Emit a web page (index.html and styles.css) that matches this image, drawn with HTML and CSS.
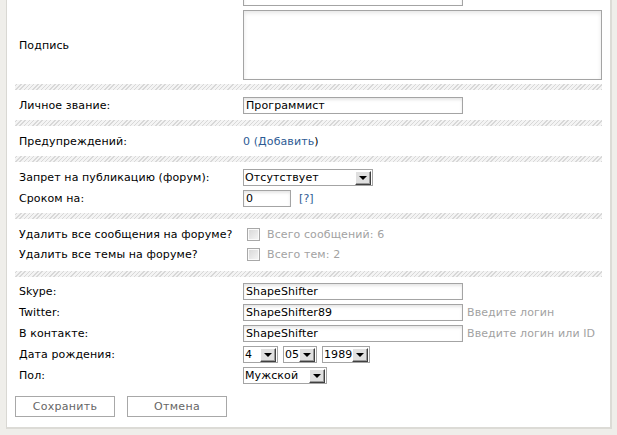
FILE: index.html
```html
<!DOCTYPE html>
<html lang="ru">
<head>
<meta charset="utf-8">
<title>Профиль</title>
<link rel="stylesheet" href="styles.css">
</head>
<body>
<div class="panel">
  <div class="section top">
    <div class="row"><span class="label"></span><span class="input wide"></span></div>
    <div class="row tall"><span class="label">Подпись</span><span class="textarea"></span></div>
  </div>
  <div class="hatch"></div>
  <div class="section">
    <div class="row"><span class="label">Личное звание:</span><span class="input wide">Программист</span></div>
  </div>
  <div class="hatch"></div>
  <div class="section">
    <div class="row"><span class="label">Предупреждений:</span><span class="text"><a class="link">0</a> <a class="link">(Добавить</a>)</span></div>
  </div>
  <div class="hatch"></div>
  <div class="section">
    <div class="row"><span class="label">Запрет на публикацию (форум):</span><span class="select s-ban"><span class="val">Отсутствует</span><span class="arrow"></span></span></div>
    <div class="row"><span class="label">Сроком на:</span><span class="value"><span class="input short">0</span><a class="link help">[?]</a></span></div>
  </div>
  <div class="hatch"></div>
  <div class="section checks">
    <div class="row"><span class="label">Удалить все сообщения на форуме?</span><span class="value"><span class="check"></span><span class="hint">Всего сообщений: 6</span></span></div>
    <div class="row"><span class="label">Удалить все темы на форуме?</span><span class="value"><span class="check"></span><span class="hint">Всего тем: 2</span></span></div>
  </div>
  <div class="hatch"></div>
  <div class="section last">
    <div class="row"><span class="label">Skype:</span><span class="input wide">ShapeShifter</span></div>
    <div class="row"><span class="label">Twitter:</span><span class="value"><span class="input wide">ShapeShifter89</span><span class="hint">Введите логин</span></span></div>
    <div class="row"><span class="label">В контакте:</span><span class="value"><span class="input wide">ShapeShifter</span><span class="hint">Введите логин или ID</span></span></div>
    <div class="row"><span class="label">Дата рождения:</span><span class="value dates"><span class="select s-day"><span class="val">4</span><span class="arrow"></span></span><span class="select s-mon"><span class="val">05</span><span class="arrow"></span></span><span class="select s-year"><span class="val">1989</span><span class="arrow"></span></span></span></div>
    <div class="row"><span class="label">Пол:</span><span class="select s-sex"><span class="val">Мужской</span><span class="arrow"></span></span></div>
  </div>
  <div class="buttons">
    <button class="btn">Сохранить</button>
    <button class="btn">Отмена</button>
  </div>
</div>
</body>
</html>
```
FILE: styles.css
```css
html, body {
  margin: 0;
  padding: 0;
}
body {
  background: #efeeea;
  font-family: "DejaVu Sans", Verdana, sans-serif;
  font-size: 11px;
  letter-spacing: 0.1px;
  color: #000;
  overflow: hidden;
  height: 435px;
}
.panel {
  background: #fff;
  margin-left: 6px;
  width: 587px;
  padding: 0 8px 10px 8px;
  border-left: 1px solid #d9d8d3;
  border-right: 2px solid #dcdbd6;
  border-bottom: 2px solid #dcdbd6;
  box-sizing: content-box;
}
.section {
  padding: 7px 0 6px;
  display: flex;
  flex-direction: column;
  gap: 4px;
}
.section.top {
  margin-top: -18px;
  padding-bottom: 4px;
}
.section.checks {
  gap: 3px;
  padding-bottom: 8px;
}
.section.last {
  padding-top: 6px;
}
.row {
  display: grid;
  grid-template-columns: 228px 1fr;
  align-items: center;
  min-height: 17px;
}
.row.tall {
  min-height: 70px;
}
.label {
  padding-left: 4px;
  white-space: nowrap;
}
.text {
  white-space: nowrap;
}
.value {
  display: flex;
  align-items: center;
}
.hatch {
  height: 6px;
  background: repeating-linear-gradient(135deg, #f4f4f4 0 1px, #d8d8d8 1px 2px, #f4f4f4 2px 3px);
}
.input {
  display: block;
  height: 15px;
  line-height: 15px;
  border: 1px solid #a4a4a4;
  box-shadow: inset 0 2px 3px #e6e6e6;
  padding: 0 2px;
  box-sizing: content-box;
  white-space: nowrap;
}
.input.wide {
  width: 214px;
}
.input.short {
  width: 42px;
}
.textarea {
  display: block;
  height: 68px;
  border: 1px solid #a4a4a4;
  box-shadow: inset 0 2px 4px #e6e6e6;
}
.link {
  color: #2d5b94;
  text-decoration: none;
}
.help {
  margin-left: 8px;
}
.hint {
  color: #a2a2a2;
  margin-left: 4px;
}
.check {
  display: inline-block;
  width: 11px;
  height: 11px;
  margin-left: 4px;
  margin-right: 3px;
  border: 1px solid #a8a8a8;
  background: linear-gradient(135deg, #d6d6d6, #f6f6f6);
  box-shadow: inset 0 0 0 1px #fafafa;
}
.select {
  display: flex;
  align-items: center;
  justify-content: space-between;
  height: 15px;
  border: 1px solid #a4a4a4;
  background: #fff;
  box-sizing: content-box;
  justify-self: start;
}
.select .val {
  padding-left: 1px;
  line-height: 15px;
  white-space: nowrap;
}
.select .arrow {
  position: relative;
  width: 16px;
  height: 14px;
  margin-right: 1px;
  background: #e0e0e0;
  border-top: 1px solid #fff;
  border-left: 1px solid #fff;
  border-right: 1px solid #404040;
  border-bottom: 1px solid #404040;
  box-sizing: border-box;
  box-shadow: inset -1px -1px 0 #9a9a9a;
}
.select .arrow::after {
  content: "";
  position: absolute;
  left: 3px;
  top: 4px;
  border-left: 4px solid transparent;
  border-right: 4px solid transparent;
  border-top: 4px solid #000;
}
.s-ban { width: 128px; }
.s-sex { width: 82px; }
.s-day { width: 33px; }
.s-mon { width: 32px; }
.s-year { width: 46px; }
.dates { gap: 5px; }
.buttons {
  display: flex;
  gap: 12px;
  padding-top: 6px;
}
.btn {
  width: 100px;
  height: 21px;
  border: 1px solid #a8a8a8;
  background: #fff;
  color: #666;
  font-family: "DejaVu Sans", Verdana, sans-serif;
  font-size: 11px;
  letter-spacing: 0.3px;
  padding: 0;
}
```
